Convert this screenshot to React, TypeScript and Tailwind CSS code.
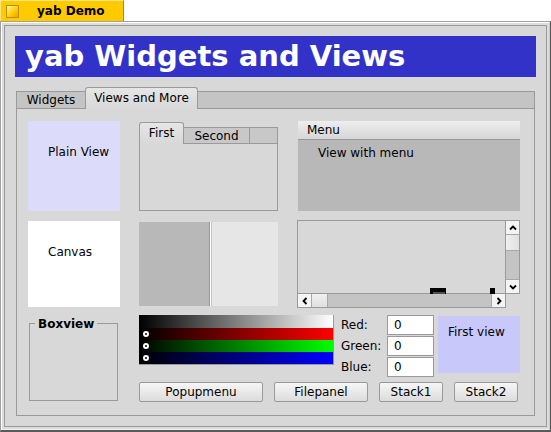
import React from "react";

function ChevUp() {
  return (
    <svg width="8" height="6" viewBox="0 0 8 6">
      <path d="M1 4.5 L4 1.5 L7 4.5" stroke="#000" strokeWidth="1.8" fill="none" />
    </svg>
  );
}
function ChevDown() {
  return (
    <svg width="8" height="6" viewBox="0 0 8 6">
      <path d="M1 1.5 L4 4.5 L7 1.5" stroke="#000" strokeWidth="1.8" fill="none" />
    </svg>
  );
}
function ChevLeft() {
  return (
    <svg width="6" height="8" viewBox="0 0 6 8">
      <path d="M4.5 1 L1.5 4 L4.5 7" stroke="#000" strokeWidth="1.8" fill="none" />
    </svg>
  );
}
function ChevRight() {
  return (
    <svg width="6" height="8" viewBox="0 0 6 8">
      <path d="M1.5 1 L4.5 4 L1.5 7" stroke="#000" strokeWidth="1.8" fill="none" />
    </svg>
  );
}

function Btn({ label, className }: { label: string; className: string }) {
  return (
    <div
      className={
        "h-[20px] flex items-center justify-center border border-[#9a9a9a] rounded-[2px] bg-[linear-gradient(#f6f6f6,#dcdcdc)] " +
        className
      }
    >
      {label}
    </div>
  );
}

function Knob() {
  return <div className="ml-[4px] w-[6px] h-[6px] rounded-full border-[2px] border-white" />;
}

export default function App() {
  return (
    <div className="w-[551px] h-[432px] bg-white flex flex-col font-['DejaVu_Sans',sans-serif] text-[12px] text-black leading-[14px]">
      {/* title tab */}
      <div className="h-[21px] w-[124px] bg-[#ffcb00] border-l border-t border-r border-l-[#ffe680] border-t-[#ffe680] border-r-[#a08a40] flex items-center">
        <div className="ml-[5px] w-[13px] h-[13px] border border-[#b89000] bg-[linear-gradient(135deg,#fff7a0,#ffc800_60%,#e8a800)]" />
        <span className="ml-[18px] font-bold">yab Demo</span>
      </div>
      {/* window frame */}
      <div className="flex-1 border-l border-t border-r border-b-2 border-l-[#a0a0a0] border-t-[#a0a0a0] border-r-[#5a5a5a] border-b-[#5a5a5a] flex flex-col">
        <div className="flex-1 border border-l-white border-t-white border-r-[#c8c8c8] border-b-[#f0f0f0] bg-[#dcdcdc] p-[2px] flex flex-col">
          <div className="flex-1 border border-[#9a9a9a] bg-[#d8d8d8] px-[10px] pt-[10px] flex flex-col">
            {/* header */}
            <div className="h-[41px] bg-[#3232c8] flex items-center pl-[10px] pb-[2px]">
              <span className="text-white font-bold text-[29px] leading-[34px]">yab Widgets and Views</span>
            </div>
            {/* tab view */}
            <div className="mt-[10px] mx-[1px] flex flex-col">
              <div className="h-[22px] flex items-end">
                <div className="h-[18px] w-[69px] bg-[#c4c4c4] border-l border-t border-b border-[#9a9a9a] flex items-center justify-center">
                  Widgets
                </div>
                <div className="h-[22px] w-[113px] bg-[linear-gradient(#e6e6e6,#d8d8d8)] border-l border-t border-r border-[#9a9a9a] rounded-t-[3px] flex items-center justify-center pb-[2px]">
                  Views and More
                </div>
                <div className="h-[18px] flex-1 bg-[#c4c4c4] border-t border-r border-b border-[#9a9a9a]" />
              </div>
              <div className="h-[307px] border-l border-r border-b border-[#9a9a9a] pl-[11px] pt-[12px] flex flex-col">
                {/* row 1 */}
                <div className="h-[90px] flex items-start">
                  <div className="w-[92px] h-[90px] bg-[#dcdcfa] pl-[20px] pt-[24px]">Plain View</div>
                  <div className="ml-[19px] mt-[1px] w-[139px] h-[89px] flex flex-col">
                    <div className="h-[22px] flex items-end">
                      <div className="h-[22px] w-[45px] bg-[linear-gradient(#e6e6e6,#d8d8d8)] border-l border-t border-r border-[#9a9a9a] rounded-t-[3px] flex items-center justify-center pb-[2px]">
                        First
                      </div>
                      <div className="h-[17px] w-[66px] bg-[#c8c8c8] border-t border-r border-b border-[#9a9a9a] flex items-center justify-center">
                        Second
                      </div>
                      <div className="h-[17px] flex-1 bg-[#c8c8c8] border-t border-r border-b border-[#9a9a9a]" />
                    </div>
                    <div className="flex-1 border-l border-r border-b border-[#9a9a9a]" />
                  </div>
                  <div className="ml-[20px] w-[222px] h-[90px] flex flex-col">
                    <div className="h-[19px] bg-[linear-gradient(#eeeeee,#d6d6d6)] border-b border-[#989898] pl-[9px] flex items-center">
                      Menu
                    </div>
                    <div className="flex-1 bg-[#b8b8b8] pl-[20px] pt-[6px]">View with menu</div>
                  </div>
                </div>
                {/* row 2 */}
                <div className="mt-[9px] h-[87px] flex items-start">
                  <div className="mt-[1px] w-[92px] h-[86px] bg-white pl-[20px] pt-[24px]">Canvas</div>
                  <div className="ml-[19px] mt-[2px] w-[139px] h-[84px] flex">
                    <div className="w-[70px] bg-[#b8b8b8]" />
                    <div className="w-[1px] bg-[#9a9a9a]" />
                    <div className="w-[1px] bg-white" />
                    <div className="w-[1px] bg-[#c8c8c8]" />
                    <div className="flex-1 bg-[#e6e6e6]" />
                  </div>
                  <div className="ml-[19px] w-[223px] h-[88px] flex flex-col">
                    <div className="h-[74px] flex">
                      <div className="relative w-[208px] h-[74px] border-l border-t border-[#9a9a9a]">
                        <div className="absolute left-[132px] bottom-0 w-[16px] h-[6px] bg-black">
                          <div className="absolute right-[1px] bottom-0 w-[12px] h-[2px] bg-[#505050]" />
                        </div>
                        <div className="absolute left-[192px] bottom-0 w-[5px] h-[6px] bg-black" />
                      </div>
                      <div className="w-[15px] h-[74px] border border-[#9a9a9a] flex flex-col bg-[#c4c4c4]">
                        <div className="h-[14px] bg-[#f4f4f4] border-b border-[#a8a8a8] flex items-center justify-center">
                          <ChevUp />
                        </div>
                        <div className="h-[16px] bg-[linear-gradient(90deg,#f0f0f0,#e0e0e0)] border-b border-[#a8a8a8]" />
                        <div className="flex-1" />
                        <div className="h-[14px] bg-[#f4f4f4] border-t border-[#a8a8a8] flex items-center justify-center">
                          <ChevDown />
                        </div>
                      </div>
                    </div>
                    <div className="h-[15px] w-[209px] -mt-[1px] border border-[#9a9a9a] flex bg-[#c4c4c4]">
                      <div className="w-[14px] bg-[#f4f4f4] border-r border-[#a8a8a8] flex items-center justify-center">
                        <ChevLeft />
                      </div>
                      <div className="w-[16px] bg-[linear-gradient(#f0f0f0,#e0e0e0)] border-r border-[#a8a8a8]" />
                      <div className="flex-1" />
                      <div className="w-[14px] bg-[#f4f4f4] border-l border-[#a8a8a8] flex items-center justify-center">
                        <ChevRight />
                      </div>
                    </div>
                  </div>
                </div>
                {/* row 3 */}
                <div className="mt-[8px] flex items-start">
                  <div className="relative ml-[1px] mt-[8px] w-[89px] h-[78px] border border-[#9a9a9a]">
                    <div className="absolute -top-[7px] left-[5px] px-[3px] bg-[#d8d8d8] font-bold">Boxview</div>
                  </div>
                  <div className="ml-[21px] w-[381px] flex flex-col">
                    <div className="h-[67px] flex items-start">
                      <div className="w-[195px] h-[50px] flex flex-col border-r border-b border-[#9a9a9a]">
                        <div className="h-[13px] bg-[linear-gradient(to_right,#000,#fff)]" />
                        <div className="h-[12px] bg-[linear-gradient(to_right,#000,#ff0000)] flex items-center">
                          <Knob />
                        </div>
                        <div className="h-[12px] bg-[linear-gradient(to_right,#000,#00ff00)] flex items-center">
                          <Knob />
                        </div>
                        <div className="h-[12px] bg-[linear-gradient(to_right,#000,#0000ff)] flex items-center">
                          <Knob />
                        </div>
                      </div>
                      <div className="ml-[7px] flex flex-col gap-[1px]">
                        <div className="h-[20px] flex items-center">
                          <span className="w-[46px]">Red:</span>
                          <div className="w-[47px] h-[20px] bg-white border border-[#9a9a9a] pl-[6px] flex items-center">0</div>
                        </div>
                        <div className="h-[20px] flex items-center">
                          <span className="w-[46px]">Green:</span>
                          <div className="w-[47px] h-[20px] bg-white border border-[#9a9a9a] pl-[6px] flex items-center">0</div>
                        </div>
                        <div className="h-[20px] flex items-center">
                          <span className="w-[46px]">Blue:</span>
                          <div className="w-[47px] h-[20px] bg-white border border-[#9a9a9a] pl-[6px] flex items-center">0</div>
                        </div>
                      </div>
                      <div className="ml-[4px] mt-[1px] w-[82px] h-[57px] bg-[#c8c8fa] pl-[10px] pt-[9px]">First view</div>
                    </div>
                    <div className="flex gap-[11px]">
                      <Btn label="Popupmenu" className="w-[124px]" />
                      <Btn label="Filepanel" className="w-[94px]" />
                      <Btn label="Stack1" className="w-[64px]" />
                      <Btn label="Stack2" className="w-[64px]" />
                    </div>
                  </div>
                </div>
              </div>
            </div>
          </div>
        </div>
      </div>
    </div>
  );
}
